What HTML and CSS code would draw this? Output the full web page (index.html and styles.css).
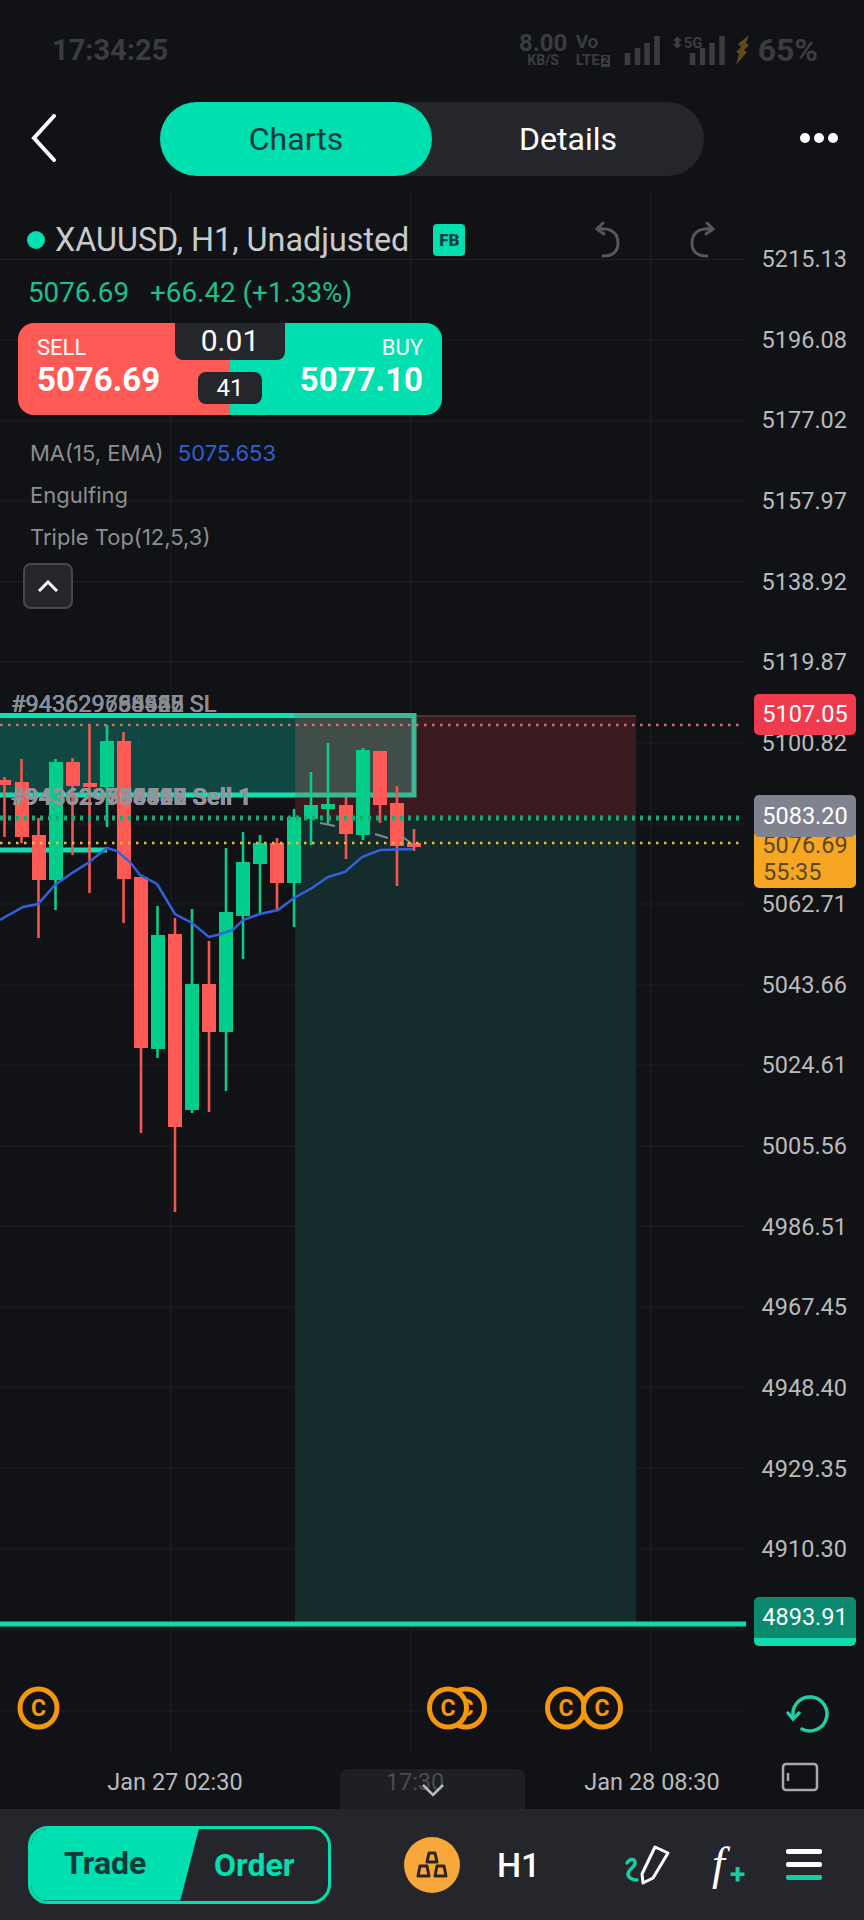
FILE: index.html
```html
<!DOCTYPE html>
<html lang="en">
<head>
    <meta charset="utf-8">
    <title>XAUUSD H1</title>
    <link rel="stylesheet" href="styles.css">
</head>
<body>
<div class="screen">
    <!-- Status bar -->
    <div class="status-bar">
        <span class="clock">17:34:25</span>
        <div class="status-icons">
            <div class="speed"><b>8.00</b><small>KB/S</small></div>
            <div class="volte"><span>Vo</span><small>LTE<i>2</i></small></div>
            <svg class="signal" width="36" height="30" viewBox="0 0 36 30"><path d="M3.5 30V18M13.5 30V13M23 30V8M33 30V1"/></svg>
            <div class="net"><span class="arrows">⬍</span><span>5G</span></div>
            <svg class="signal" width="36" height="30" viewBox="0 0 36 30"><path d="M3.5 30V18M13.5 30V13M23 30V8M33 30V1"/></svg>
            <svg class="bolt" width="16" height="30" viewBox="0 0 16 30"><path d="M14 0 3 9l3 3-5 5 3 2-3 11 11-13-3-2 5-5-3-2z"/></svg>
            <span class="battery">65%</span>
        </div>
    </div>

    <!-- Top nav -->
    <div class="nav">
        <svg class="back" width="26" height="48" viewBox="0 0 26 48"><path d="M23 2 3 24l20 22"/></svg>
        <div class="tabs">
            <div class="tab active">Charts</div>
            <div class="tab">Details</div>
        </div>
        <div class="more"><i></i><i></i><i></i></div>
    </div>

    <!-- Chart -->
    <div class="chart">
        <svg class="canvas" width="864" height="1619" viewBox="0 190 864 1619">
            <g class="grid">
                <path d="M171 190V1752M411 190V1752M651 190V1752"/>
                <path d="M0 259.5H746M0 340H746M0 421H746M0 501H746M0 582H746M0 662H746M0 743H746M0 824H746M0 904H746M0 985H746M0 1065H746M0 1146H746M0 1226H746M0 1307H746M0 1387H746M0 1468H746M0 1549H746M0 1630H746M0 1711H746"/>
            </g>

            <!-- risk / reward boxes -->
            <rect class="sl-zone" x="295" y="715" width="341" height="102"/>
            <rect class="tp-zone" x="295" y="817" width="341" height="805"/>
            <path class="zone-edge" d="M295 716H636"/>

            <!-- position box -->
            <rect class="box-fill" x="0" y="716" width="295" height="79"/>
            <rect class="box-fill-over" x="295" y="716" width="119" height="79"/>
            <path class="box-line" d="M0 715.5H295M0 795H295M0 850H107"/>
            <path class="box-line-over" d="M295 715.5H414V795H295"/>

            <!-- wicks -->
            <path class="wick-up" d="M55.5 759V910M107 725V827M157.5 906V1058M192 909V1113M226 848V1091M243 832V959M260 835V913M294 809V927M311 772V845M328 743V825M363 748V840"/>
            <path class="wick-down" d="M4.5 777V837M21.5 759V843M38.5 818V938M72.5 758V855M89.5 725V893M123.5 732V923M141 877V1133M175 918V1212M209 941V1112M277 838V909M346 797V859M380 751V823M397 786V886M414 829V851"/>

            <!-- bodies -->
            <g class="body-up">
                <rect x="49" y="762" width="14" height="118"/>
                <rect x="100" y="741" width="14" height="46"/>
                <rect x="151" y="935" width="14" height="114"/>
                <rect x="185" y="984" width="14" height="126"/>
                <rect x="219" y="912" width="14" height="120"/>
                <rect x="236" y="862" width="14" height="54"/>
                <rect x="253" y="843" width="14" height="21"/>
                <rect x="287" y="817" width="14" height="66"/>
                <rect x="304" y="805" width="14" height="14"/>
                <rect x="321" y="804" width="14" height="5"/>
                <rect x="356" y="750" width="14" height="85"/>
            </g>
            <g class="body-down">
                <rect x="-2" y="780" width="13" height="5"/>
                <rect x="15" y="782" width="14" height="55"/>
                <rect x="32" y="835" width="14" height="45"/>
                <rect x="66" y="762" width="14" height="24"/>
                <rect x="83" y="783" width="14" height="4"/>
                <rect x="117" y="741" width="14" height="138"/>
                <rect x="134" y="877" width="14" height="171"/>
                <rect x="168" y="934" width="14" height="193"/>
                <rect x="202" y="984" width="14" height="48"/>
                <rect x="270" y="843" width="14" height="40"/>
                <rect x="339" y="805" width="14" height="29"/>
                <rect x="373" y="751" width="14" height="54"/>
                <rect x="390" y="803" width="14" height="43"/>
                <rect x="407" y="843" width="14" height="4"/>
            </g>

            <!-- EMA and triple top -->
            <polyline class="ma" points="0,920 23,907 38,904 55,885 72,873 88,863 107,848 117,851 130,862 140,875 157,884 175,914 192,923 209,937 217,935 233,930 243,920 260,914 278,910 294,898 312,888 328,877 345,872 362,857 380,850 413,849"/>
            <path class="pattern" d="M320 823 335 826M375 834 388 838M403 837 413 845"/>

            <!-- price lines -->
            <path class="dots-red" d="M0 725H742"/>
            <path class="dots-green" d="M0 818H742"/>
            <path class="dots-yellow" d="M0 843H742"/>
            <path class="last-line" d="M0 1624H746"/>

            <!-- dividend markers -->
            <g class="coin"><ellipse cx="38.5" cy="1708" rx="18.5" ry="19"/><text x="38.5" y="1716">C</text></g>
            <g class="coin"><ellipse cx="466" cy="1708" rx="18.5" ry="19"/><text x="466" y="1716">C</text></g>
            <g class="coin"><ellipse cx="448" cy="1708" rx="18.5" ry="19"/><text x="448" y="1716">C</text></g>
            <g class="coin"><ellipse cx="566" cy="1708" rx="18.5" ry="19"/><text x="566" y="1716">C</text></g>
            <g class="coin"><ellipse cx="602" cy="1708" rx="18.5" ry="19"/><text x="602" y="1716">C</text></g>
        </svg>

        <div class="legend">
            <div class="symbol-row">
                <i class="live-dot"></i>
                <span class="symbol">XAUUSD, H1, Unadjusted</span>
                <span class="fb-badge">FB</span>
                <div class="history">
                    <svg width="28" height="36" viewBox="0 0 28 36"><path d="M8 1 2 7l7 5M3 7c12-1 20 3 20 14 0 9-6 13-15 13"/></svg>
                    <svg width="28" height="36" viewBox="0 0 28 36"><path d="M20 1l6 6-7 5M25 7C13 6 5 10 5 21c0 9 6 13 15 13"/></svg>
                </div>
            </div>
            <div class="quote"><span>5076.69</span><span>+66.42 (+1.33%)</span></div>
            <div class="trade-box">
                <div class="side sell"><span>SELL</span><b>5076.69</b></div>
                <div class="side buy"><span>BUY</span><b>5077.10</b></div>
                <div class="lot">0.01</div>
                <div class="spread">41</div>
            </div>
            <div class="indicators">
                <div>MA(15, EMA) <span class="ma-value">5075.653</span></div>
                <div>Engulfing</div>
                <div>Triple Top(12,5,3)</div>
            </div>
            <div class="collapse">
                <svg width="20" height="12" viewBox="0 0 20 12"><path d="M1 11 10 2l9 9"/></svg>
            </div>
        </div>

        <!-- overlapped order labels -->
        <div class="order-label sl-label">
            <span>#943629785555 SL</span><span>#943629768582 SL</span><span>#943629693527 SL</span><span>#943629734440 SL</span><span>#943629750968 SL</span>
        </div>
        <div class="order-label sell-label">
            <span>#943629785555 Sell 1</span><span>#943629768582 Sell 1</span><span>#943629693527 Sell 1</span><span>#943629734440 Sell 1</span><span>#943629750968 Sell 1</span>
        </div>

        <div class="price-axis">
            <span>5215.13</span><span>5196.08</span><span>5177.02</span><span>5157.97</span>
            <span>5138.92</span><span>5119.87</span><span>5100.82</span><span>5081.77</span>
            <span>5062.71</span><span>5043.66</span><span>5024.61</span><span>5005.56</span>
            <span>4986.51</span><span>4967.45</span><span>4948.40</span><span>4929.35</span>
            <span>4910.30</span>
        </div>
        <div class="tag tag-sl">5107.05</div>
        <div class="tag tag-bid"><span>5076.69</span><span>55:35</span></div>
        <div class="tag tag-entry">5083.20</div>
        <div class="tag tag-tp">4893.91</div>

        <svg class="reset" width="44" height="44" viewBox="0 0 44 44"><path d="M16 36A17 17 0 1 0 7 22"/><path d="M2 20l5 6 6-6"/></svg>
        <svg class="layout-icon" width="38" height="30" viewBox="0 0 38 30"><rect x="2" y="2" width="34" height="26" rx="3"/><path d="M7 11v8"/></svg>

        <div class="time-axis">
            <span>Jan 27 02:30</span>
            <span class="time-mid">17:30</span>
            <span class="time-last">Jan 28 08:30</span>
        </div>
        <div class="fold">
            <svg width="24" height="14" viewBox="0 0 24 14"><path d="M2 2l10 10L22 2"/></svg>
        </div>
    </div>

    <!-- Bottom toolbar -->
    <div class="toolbar">
        <div class="trade-order">
            <div class="btn-trade">Trade</div>
            <div class="btn-order">Order</div>
        </div>
        <div class="gold-icon">
            <svg width="32" height="28" viewBox="0 0 32 28"><path d="M13 2h6l2 9H11zM4 15h7l2 10H2zM21 15h7l2 10H19z"/></svg>
        </div>
        <span class="period">H1</span>
        <div class="tools">
            <svg width="52" height="42" viewBox="0 0 52 42">
                <path class="squiggle" d="M5 19C7 15 12 14 13 18 14 23 6 25 6 30c0 4 5 6 9 6"/>
                <path class="pencil" d="M33 3 46 9 31 34 21 39 20 30z"/>
            </svg>
            <div class="func"><span>f</span><b>+</b></div>
            <div class="menu"><i></i><i></i><i class="teal"></i></div>
        </div>
    </div>
</div>
</body>
</html>
```

FILE: styles.css
```css
* {
    box-sizing: border-box;
}

body {
    margin: 0;
    background: #111215;
    font-family: Roboto, "Liberation Sans", sans-serif;
}

.screen {
    width: 864px;
    height: 1920px;
    display: flex;
    flex-direction: column;
    overflow: hidden;
    background: #111215;
}

/* status bar */
.status-bar {
    height: 102px;
    padding: 0 46px 2px 52px;
    display: flex;
    justify-content: space-between;
    align-items: center;
    color: #3b3c3f;
}

.clock {
    font-size: 29px;
    font-weight: 700;
}

.status-icons {
    display: flex;
    align-items: center;
    height: 32px;
}

.speed,
.volte {
    display: flex;
    flex-direction: column;
    line-height: 1;
}

.speed {
    width: 47px;
    align-items: center;
    margin-right: 9px;
}

.speed b {
    font-size: 24px;
    line-height: 20px;
}

.speed small {
    font-size: 14px;
    font-weight: 700;
}

.volte small {
    display: flex;
    align-items: center;
    margin-top: 2px;
    font-size: 15px;
    font-weight: 700;
}

.volte small i {
    width: 9px;
    height: 12px;
    margin-left: 1px;
    border-radius: 1px;
    background: #3b3c3f;
    color: #111215;
    font-size: 10px;
    font-style: normal;
    line-height: 12px;
    text-align: center;
}

.volte {
    width: 38px;
    font-size: 19px;
    font-weight: 700;
    margin-right: 10px;
}

.signal path {
    stroke: #3b3c3f;
    stroke-width: 5.5;
    fill: none;
}

.net {
    display: flex;
    align-self: flex-start;
    width: 31px;
    margin-left: 11px;
    margin-right: -13px;
    font-size: 15px;
    font-weight: 700;
}

.bolt {
    margin: 0 7px 0 10px;
}

.bolt path {
    fill: #5f4a1e;
}

.battery {
    font-size: 32px;
    font-weight: 700;
}

/* nav */
.nav {
    height: 88px;
    padding-bottom: 14px;
    position: relative;
    display: flex;
    justify-content: center;
    align-items: center;
}

.back {
    position: absolute;
    left: 31px;
    top: 12px;
}

.back path {
    fill: none;
    stroke: #fff;
    stroke-width: 4;
    stroke-linecap: round;
}

.tabs {
    width: 544px;
    height: 74px;
    display: flex;
    border-radius: 37px;
    background: #25262b;
}

.tab {
    width: 272px;
    border-radius: 37px;
    display: flex;
    justify-content: center;
    align-items: center;
    font-size: 32px;
    color: #fff;
}

.tab.active {
    background: #00dfb0;
    color: #0f3a3a;
}

.more {
    position: absolute;
    left: 800px;
    top: 31px;
    display: flex;
    gap: 4px;
}

.more i {
    width: 10px;
    height: 10px;
    border-radius: 50%;
    background: #fff;
}

/* chart */
.chart {
    position: relative;
    flex: 1;
}

.canvas {
    position: absolute;
    left: 0;
    top: 0;
}

.grid path {
    stroke: #1e1f23;
    stroke-width: 1;
    fill: none;
}

.sl-zone {
    fill: #3b1b20;
}

.tp-zone {
    fill: #142d2c;
}

.zone-edge {
    stroke: #4e3234;
    stroke-width: 2;
}

.box-fill {
    fill: #0f4842;
}

.box-fill-over {
    fill: #414d49;
}

.box-line {
    stroke: #14dfb2;
    stroke-width: 5;
    fill: none;
}

.box-line-over {
    stroke: #3cb898;
    stroke-width: 5;
    fill: none;
}

.wick-up {
    stroke: #0bcb8a;
    stroke-width: 2.6;
}

.wick-down {
    stroke: #f2574f;
    stroke-width: 2.6;
}

.body-up rect {
    fill: #03cd8b;
}

.body-down rect {
    fill: #ff5a55;
}

.ma {
    fill: none;
    stroke: #2f62dc;
    stroke-width: 2.5;
}

.pattern {
    stroke: #7b8a8c;
    stroke-width: 2;
    fill: none;
}

.dots-red,
.dots-yellow {
    stroke-width: 2.5;
    stroke-dasharray: 2.5 5.5;
}

.dots-red {
    stroke: #d4705f;
}

.dots-yellow {
    stroke: #e9bb3e;
}

.dots-green {
    stroke: #1ca777;
    stroke-width: 5;
    stroke-dasharray: 3 5;
}

.last-line {
    stroke: #12d8ac;
    stroke-width: 5;
}

.coin ellipse {
    fill: #111215;
    stroke: #f5960f;
    stroke-width: 5;
}

.coin text {
    fill: #f5960f;
    font-size: 23px;
    font-weight: 700;
    text-anchor: middle;
}

/* legend block */
.legend {
    position: absolute;
    left: 0;
    top: 0;
    width: 746px;
}

.symbol-row {
    height: 50px;
    margin-top: 25px;
    padding-left: 27px;
    display: flex;
    align-items: center;
    position: relative;
}

.live-dot {
    width: 18px;
    height: 18px;
    border-radius: 50%;
    background: #00dfb0;
    margin-right: 10px;
}

.symbol {
    font-size: 32.3px;
    color: #c9cacc;
}

.fb-badge {
    margin-left: 24px;
    width: 32px;
    height: 32px;
    border-radius: 4px;
    background: #00dfb0;
    color: #12403e;
    font-size: 17px;
    font-weight: 900;
    display: flex;
    justify-content: center;
    align-items: center;
}

.history {
    position: absolute;
    left: 595px;
    top: 7px;
    display: flex;
    gap: 64px;
}

.history path {
    fill: none;
    stroke: #56575a;
    stroke-width: 3;
    stroke-linecap: round;
}

.quote {
    margin-top: 11px;
    padding-left: 28px;
    display: flex;
    gap: 21px;
    font-size: 27.8px;
    line-height: 33px;
    color: #1cc08e;
}

.trade-box {
    position: relative;
    width: 424px;
    height: 92px;
    margin: 14px 0 0 18px;
    display: flex;
    border-radius: 16px;
    overflow: hidden;
    color: #fff;
}

.side {
    width: 212px;
    padding: 12px 19px;
    display: flex;
    flex-direction: column;
}

.side span {
    font-size: 22px;
    line-height: 26px;
}

.side b {
    font-size: 33px;
    line-height: 36px;
    margin-top: 1px;
}

.sell {
    background: #ff5a55;
}

.buy {
    background: #00dfb0;
    align-items: flex-end;
}

.lot {
    position: absolute;
    left: 157px;
    top: 0;
    width: 110px;
    height: 37px;
    border-radius: 0 0 8px 8px;
    background: #25262b;
    font-size: 30px;
    text-align: center;
    line-height: 36px;
}

.spread {
    position: absolute;
    left: 180px;
    top: 49px;
    width: 64px;
    height: 32px;
    border-radius: 8px;
    background: #25262b;
    font-size: 24px;
    text-align: center;
    line-height: 33px;
}

.indicators {
    margin: 17px 0 0 30px;
    font-family: Inter, Roboto, sans-serif;
    font-size: 22px;
    line-height: 42px;
    color: #8d8e91;
}

.ma-value {
    color: #2f5fd8;
    margin-left: 8px;
}

.collapse {
    width: 50px;
    height: 46px;
    margin: 5px 0 0 23px;
    border: 2px solid #47484c;
    border-radius: 8px;
    background: #25262b;
    display: flex;
    justify-content: center;
    align-items: center;
}

.collapse path {
    fill: none;
    stroke: #fff;
    stroke-width: 3;
}

/* overlapped labels on the chart */
.order-label {
    position: absolute;
    left: 11px;
    color: #8a8c95;
    font-size: 23.5px;
}

.order-label span {
    position: absolute;
    left: 0;
    top: 0;
    white-space: nowrap;
}

.sl-label {
    top: 500px;
}

.sell-label {
    top: 593px;
    font-weight: 700;
    color: #92949c;
}

/* price axis */
.price-axis {
    position: absolute;
    left: 746px;
    top: 29px;
    width: 118px;
    padding-right: 17px;
    display: flex;
    flex-direction: column;
    align-items: flex-end;
    font-size: 23.5px;
    color: #b9babc;
}

.price-axis span {
    height: 80.65px;
    line-height: 80.65px;
}

.tag {
    position: absolute;
    left: 754px;
    width: 102px;
    border-radius: 5px;
    color: #fff;
    font-size: 23.5px;
    text-align: center;
}

.tag-sl {
    top: 504px;
    height: 41px;
    line-height: 41px;
    background: #f03a4e;
}

.tag-entry {
    top: 605px;
    height: 42px;
    line-height: 42px;
    background: #80838f;
}

.tag-bid {
    top: 640px;
    height: 58px;
    padding-top: 2px;
    background: #f6a623;
    color: #5c4720;
    display: flex;
    flex-direction: column;
    line-height: 27px;
}

.tag-bid span:last-child {
    text-align: left;
    padding-left: 9px;
}

.tag-tp {
    top: 1407px;
    height: 49px;
    line-height: 41px;
    background: #0c8a6f;
    border-bottom: 8px solid #12d9ab;
}

.reset {
    position: absolute;
    left: 786px;
    top: 1503px;
}

.reset path {
    fill: none;
    stroke: #1fd0a4;
    stroke-width: 3.5;
    stroke-linecap: round;
}

.layout-icon {
    position: absolute;
    left: 781px;
    top: 1572px;
}

.layout-icon rect,
.layout-icon path {
    fill: none;
    stroke: #a8a9ab;
    stroke-width: 2.5;
}

.time-axis {
    position: absolute;
    left: 0;
    top: 1578px;
    width: 746px;
    padding-left: 55px;
    display: flex;
    font-size: 23.5px;
    line-height: 28px;
    color: #b9babc;
}

.time-axis span {
    width: 240px;
    flex-shrink: 0;
    text-align: center;
}

.time-last {
    margin-left: -3px;
}

.time-mid {
    position: relative;
    z-index: 2;
    color: #4a4b4e;
}

.fold {
    position: absolute;
    left: 340px;
    top: 1579px;
    width: 185px;
    height: 40px;
    border-radius: 8px 8px 0 0;
    background: #1e1f24;
    display: flex;
    justify-content: center;
    padding-top: 14px;
}

.fold svg {
    position: relative;
    z-index: 3;
}

.fold path {
    fill: none;
    stroke: #b9babc;
    stroke-width: 2.5;
}

/* bottom toolbar */
.toolbar {
    height: 111px;
    padding: 0 42px 0 28px;
    display: flex;
    align-items: center;
    background: #25262b;
}

.trade-order {
    position: relative;
    width: 303px;
    height: 78px;
    display: flex;
    border: 3px solid #00dfb0;
    border-radius: 20px;
    overflow: hidden;
    font-size: 32px;
    font-weight: 700;
}

.btn-trade {
    width: 170px;
    margin-left: -2px;
    padding-left: 35px;
    background: #00dfb0;
    color: #0f3a3a;
    line-height: 68px;
    clip-path: polygon(0 0, 100% 0, 89% 100%, 0 100%);
}

.btn-order {
    padding-left: 15px;
    color: #00dfb0;
    line-height: 72px;
}

.gold-icon {
    width: 56px;
    height: 56px;
    margin-left: 73px;
    border-radius: 50%;
    background: #f9a63a;
    display: flex;
    justify-content: center;
    align-items: center;
}

.gold-icon path {
    fill: none;
    stroke: #2a2621;
    stroke-width: 3;
    stroke-linejoin: round;
}

.period {
    margin-left: 37px;
    font-size: 34px;
    font-weight: 500;
    color: #fff;
}

.tools {
    margin-left: auto;
    display: flex;
    align-items: center;
}

.squiggle {
    fill: none;
    stroke: #13cfa6;
    stroke-width: 3.5;
    stroke-linecap: round;
}

.pencil {
    fill: none;
    stroke: #fff;
    stroke-width: 3;
    stroke-linejoin: round;
}

.func {
    position: relative;
    width: 40px;
    height: 50px;
    margin-left: 38px;
    color: #fff;
}

.func span {
    font-family: "Liberation Serif", serif;
    font-style: italic;
    font-size: 46px;
    line-height: 48px;
}

.func b {
    position: absolute;
    left: 18px;
    top: 18px;
    font-size: 28px;
    color: #13cfa6;
}

.menu {
    width: 36px;
    margin-left: 34px;
    display: flex;
    flex-direction: column;
    gap: 8px;
}

.menu i {
    height: 5px;
    border-radius: 2px;
    background: #fff;
}

.menu i.teal {
    background: #13cfa6;
}
```
